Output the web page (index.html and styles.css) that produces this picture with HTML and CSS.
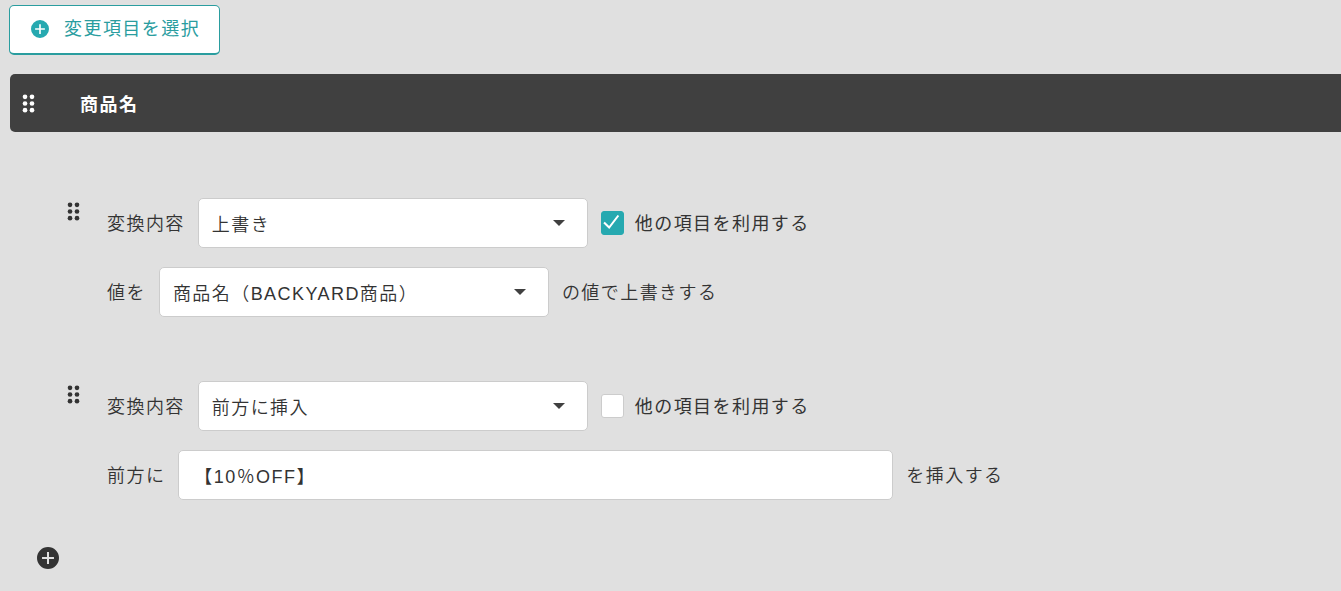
FILE: index.html
```html
<!DOCTYPE html>
<html lang="ja">
<head>
<meta charset="utf-8">
<title>変更項目</title>
<link rel="stylesheet" href="styles.css">
</head>
<body>
<svg class="defs" aria-hidden="true">
  <symbol id="grip" viewBox="0 0 12 18">
    <circle cx="2.700" cy="2.700" r="2.200"/><circle cx="9.300" cy="2.700" r="2.200"/>
    <circle cx="2.700" cy="9" r="2.200"/><circle cx="9.300" cy="9" r="2.200"/>
    <circle cx="2.700" cy="15.300" r="2.200"/><circle cx="9.300" cy="15.300" r="2.200"/>
  </symbol>
  <symbol id="plus" viewBox="0 0 24 24">
    <path fill-rule="evenodd" d="M12 0a12 12 0 1 0 0 24 12 12 0 0 0 0-24zM10.9 5.5h2.2v5.4h5.4v2.2h-5.4v5.4h-2.2v-5.4H5.500v-2.200h5.400z"/>
  </symbol>
</svg>
<main class="page">
  <button class="choose" type="button">
    <svg class="choose-icon" aria-hidden="true"><use href="#plus"/></svg>
    <span class="choose-label">変更項目を選択</span>
  </button>

  <header class="bar">
    <svg class="grip" aria-hidden="true"><use href="#grip"/></svg>
    <h1 class="bar-title">商品名</h1>
  </header>

  <section class="rules">
    <div class="rule">
      <svg class="grip" aria-hidden="true"><use href="#grip"/></svg>
      <div class="rows">
        <div class="row">
          <label for="type1">変換内容</label>
          <select class="control" id="type1"><option>上書き</option></select>
          <label class="check"><input type="checkbox" checked><span>他の項目を利用する</span></label>
        </div>
        <div class="row">
          <label for="value1">値を</label>
          <select class="control" id="value1"><option>商品名（BACKYARD商品）</option></select>
          <span>の値で上書きする</span>
        </div>
      </div>
    </div>

    <div class="rule">
      <svg class="grip" aria-hidden="true"><use href="#grip"/></svg>
      <div class="rows">
        <div class="row">
          <label for="type2">変換内容</label>
          <select class="control" id="type2"><option>前方に挿入</option></select>
          <label class="check"><input type="checkbox"><span>他の項目を利用する</span></label>
        </div>
        <div class="row">
          <label for="value2">前方に</label>
          <input class="control text" id="value2" type="text" value="【10％OFF】">
          <span>を挿入する</span>
        </div>
      </div>
    </div>
  </section>

  <button class="add" type="button" aria-label="追加"><svg class="add-icon" aria-hidden="true"><use href="#plus"/></svg></button>
</main>
</body>
</html>
```

FILE: styles.css
```css
* { box-sizing: border-box; }

body {
  margin: 0;
  background: #e0e0e0;
  color: #333;
  font-family: "Noto Sans CJK JP", sans-serif;
  font-size: 18px;
  font-weight: 350;
  line-height: 26px;
  letter-spacing: 0.08em;
}

button, input, select { font: inherit; color: inherit; letter-spacing: inherit; }

.defs { position: absolute; width: 0; height: 0; }

.page { padding: 5px 0 20px 9px; }

.choose {
  display: flex;
  align-items: center;
  gap: 15px;
  height: 50px;
  padding: 0 19px 2px 21px;
  border: 1px solid #2a9d9f;
  border-bottom-width: 2px;
  border-radius: 5px;
  background: #fff;
  color: #2a9d9f;
  font-weight: 400;
}

.choose-icon { width: 18px; height: 18px; fill: #26a9b0; }

.choose-label { padding-bottom: 3px; }

.bar {
  display: flex;
  align-items: center;
  gap: 45px;
  height: 58px;
  margin: 19px 0 0 1px;
  padding: 0 12px;
  border-radius: 5px 0 0 5px;
  background: #404040;
  color: #fff;
}

.bar-title { margin: 0; font-size: 18px; font-weight: 700; }

.grip { flex: none; width: 13px; height: 19px; fill: currentColor; }

.rules {
  display: flex;
  flex-direction: column;
  gap: 64px;
  padding: 66px 16px 0 58px;
}

.rule { display: flex; align-items: flex-start; gap: 27px; }

.rule > .grip { margin-top: 4px; }

.rows { display: grid; gap: 19px; flex: 1; min-width: 0; }

.row { display: flex; align-items: center; gap: 13px; }

.row > label, .row > span { white-space: nowrap; }

.row > label:not(.check), .row > span, .check span { padding-bottom: 3px; }

.control {
  width: 390px;
  height: 50px;
  padding: 3px 13px 0;
  border: 1px solid #ccc;
  border-radius: 5px;
  background: #fff;
  font-family: "Liberation Sans", "Noto Sans CJK JP", sans-serif;
}

select.control {
  appearance: none;
  background: #fff url("data:image/svg+xml,%3Csvg xmlns='http://www.w3.org/2000/svg' width='12' height='6'%3E%3Cpath d='M0 0h12L6 6z' fill='%23404040'/%3E%3C/svg%3E") no-repeat right 22px center;
}

.text { width: 715px; padding: 0 15px; }

.check { display: flex; align-items: center; gap: 11px; font-weight: 400; }

.check input {
  appearance: none;
  width: 23px;
  height: 24px;
  margin: 0;
  border: 1px solid #ccc;
  border-radius: 3px;
  background: #fff;
}

.check input:checked {
  border-color: #26a9b0;
  background: #26a9b0 url("data:image/svg+xml,%3Csvg xmlns='http://www.w3.org/2000/svg' width='22' height='22'%3E%3Cpath d='M2.500 10.500L7.500 15.500L16.500 3.500' fill='none' stroke='white' stroke-width='2'/%3E%3C/svg%3E") no-repeat center;
}

.add {
  display: block;
  margin: 47px 0 0 28px;
  padding: 0;
  border: 0;
  background: none;
  line-height: 0;
}

.add-icon { width: 22px; height: 22px; fill: #333; }
```
